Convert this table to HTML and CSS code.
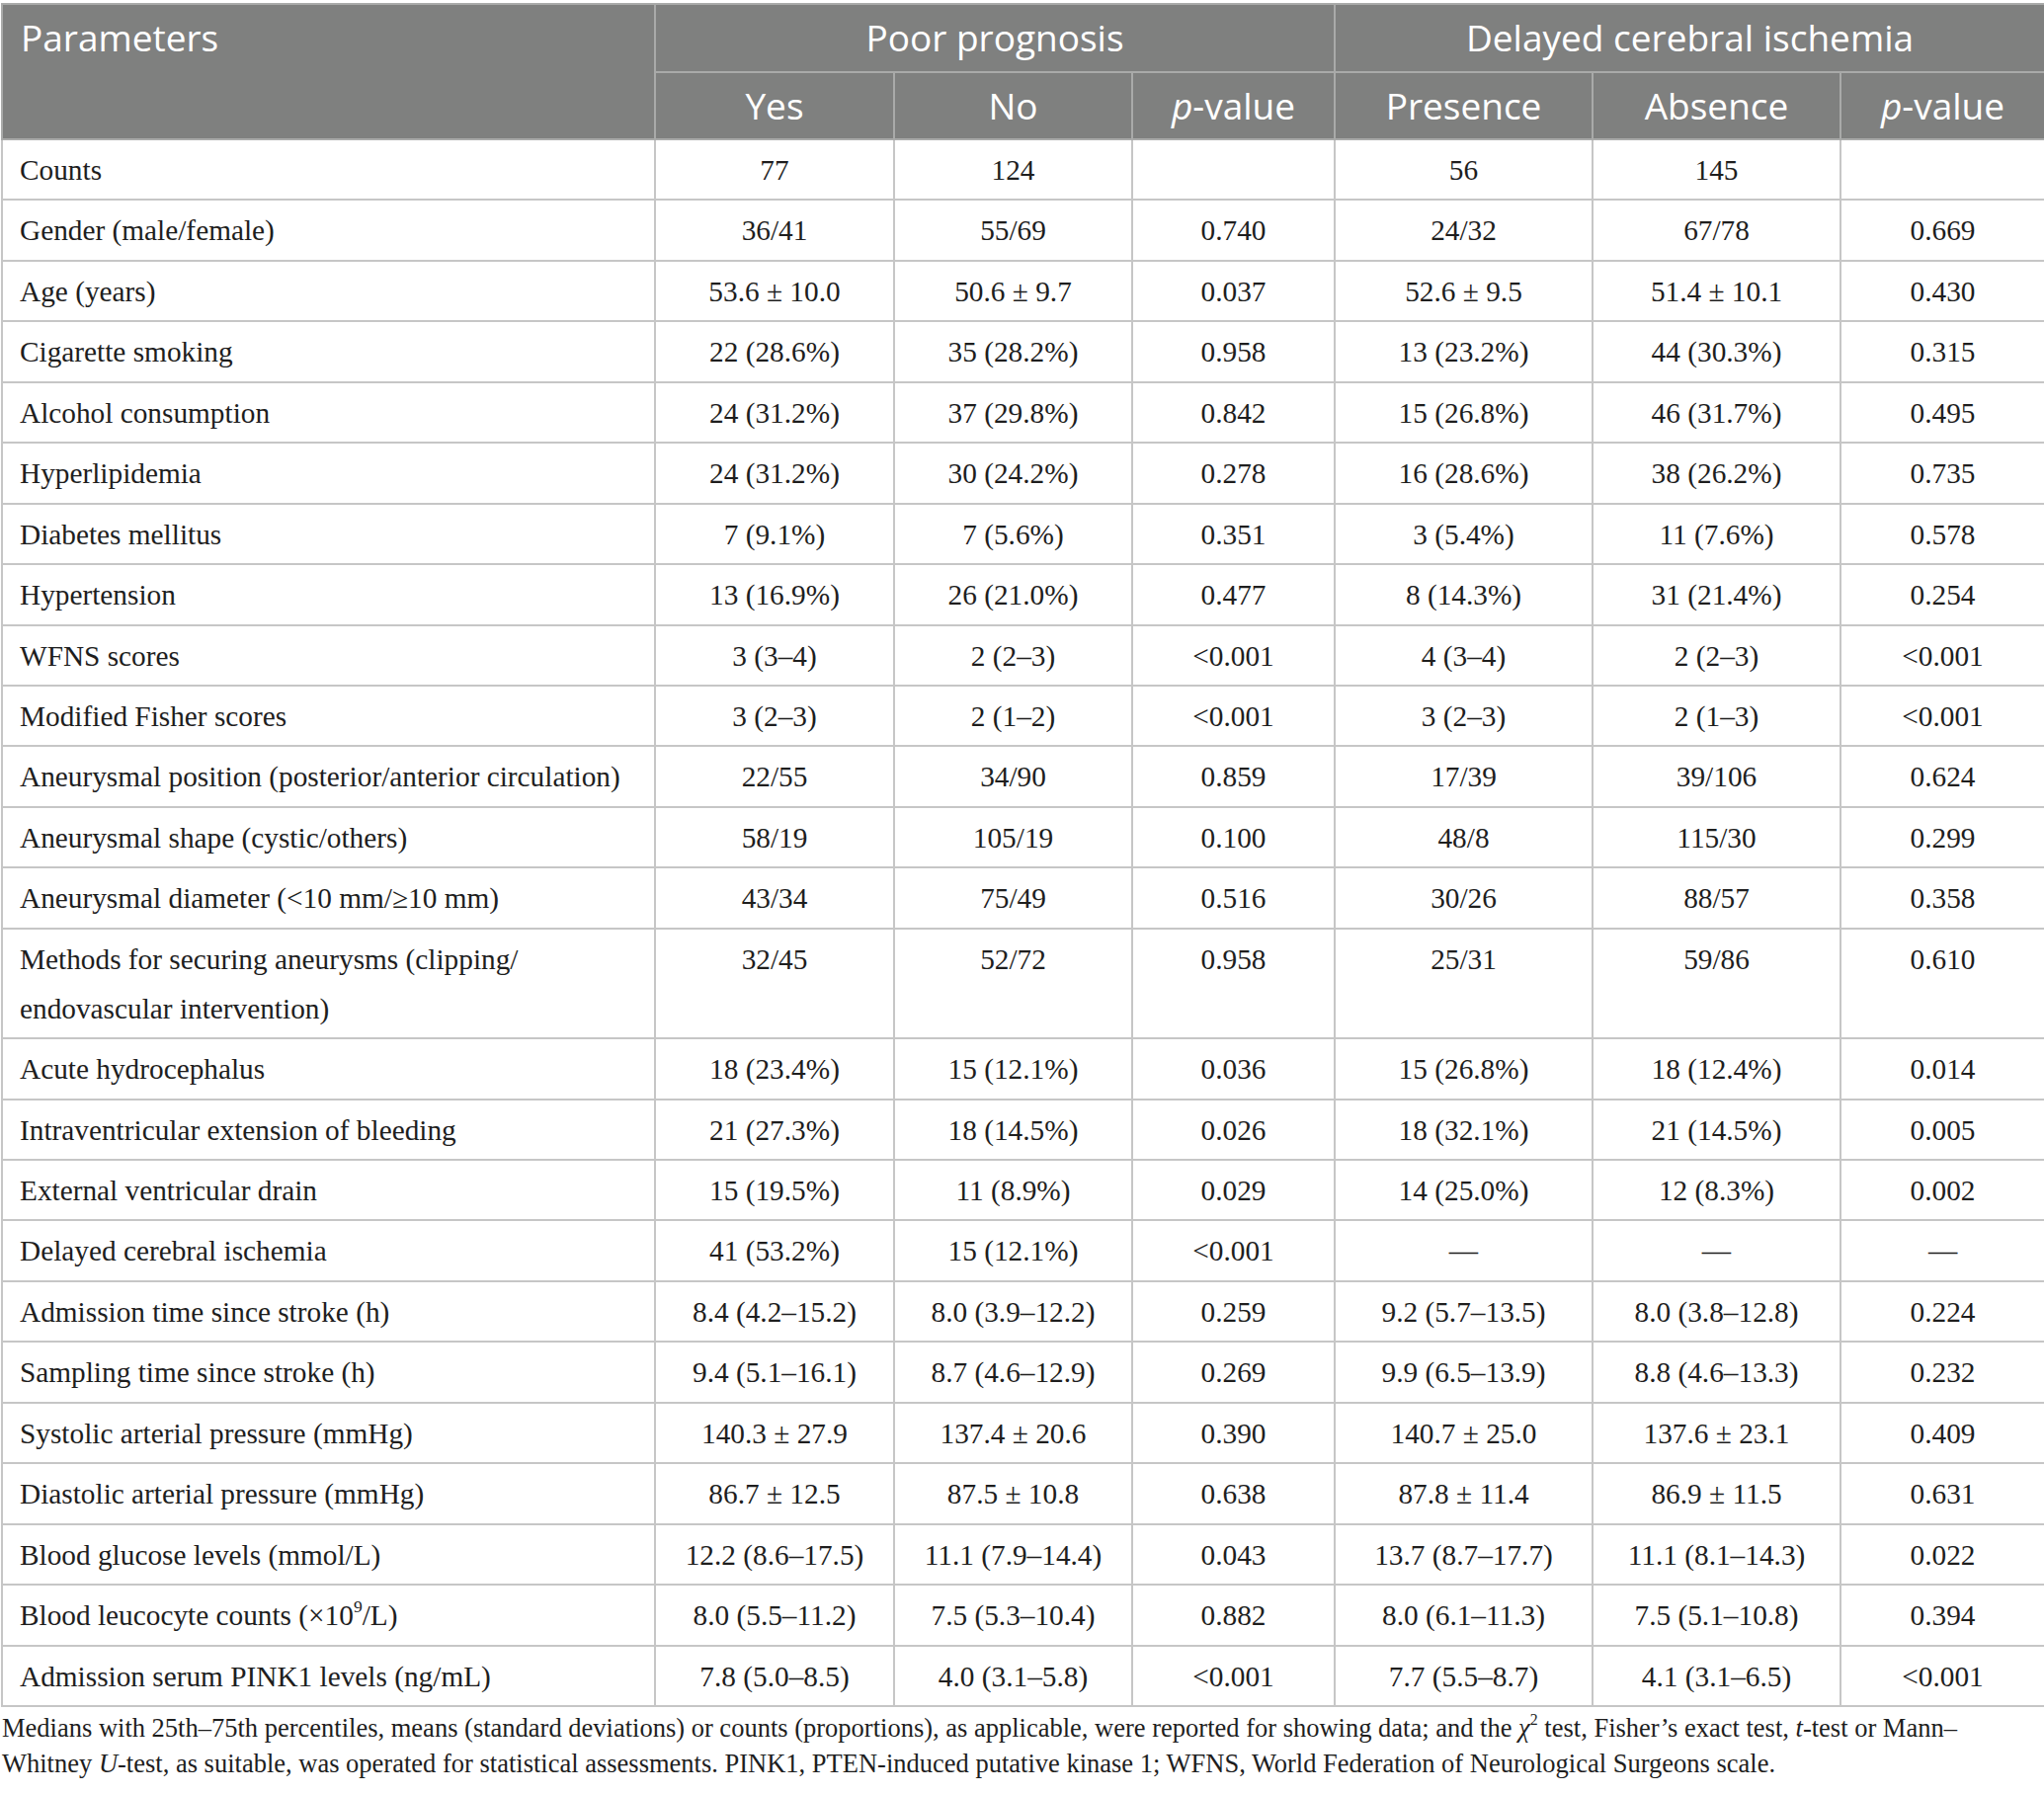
FILE: index.html
```html
<!DOCTYPE html>
<html lang="en">
<head>
<meta charset="utf-8">
<title>Table</title>
<link rel="stylesheet" href="styles.css">
</head>
<body>
<table class="data">
  <colgroup>
    <col class="c-param"><col class="c-yes"><col class="c-no"><col class="c-p1"><col class="c-pres"><col class="c-abs"><col class="c-p2">
  </colgroup>
  <thead>
    <tr class="h1">
      <th rowspan="2" class="th-param">Parameters</th>
      <th colspan="3">Poor prognosis</th>
      <th colspan="3">Delayed cerebral ischemia</th>
    </tr>
    <tr class="h2">
      <th>Yes</th><th>No</th><th><i>p</i>-value</th>
      <th>Presence</th><th>Absence</th><th><i>p</i>-value</th>
    </tr>
  </thead>
  <tbody>
    <tr><td class="param">Counts</td><td>77</td><td>124</td><td></td><td>56</td><td>145</td><td></td></tr>
    <tr><td class="param">Gender (male/female)</td><td>36/41</td><td>55/69</td><td>0.740</td><td>24/32</td><td>67/78</td><td>0.669</td></tr>
    <tr><td class="param">Age (years)</td><td>53.6 ± 10.0</td><td>50.6 ± 9.7</td><td>0.037</td><td>52.6 ± 9.5</td><td>51.4 ± 10.1</td><td>0.430</td></tr>
    <tr><td class="param">Cigarette smoking</td><td>22 (28.6%)</td><td>35 (28.2%)</td><td>0.958</td><td>13 (23.2%)</td><td>44 (30.3%)</td><td>0.315</td></tr>
    <tr><td class="param">Alcohol consumption</td><td>24 (31.2%)</td><td>37 (29.8%)</td><td>0.842</td><td>15 (26.8%)</td><td>46 (31.7%)</td><td>0.495</td></tr>
    <tr><td class="param">Hyperlipidemia</td><td>24 (31.2%)</td><td>30 (24.2%)</td><td>0.278</td><td>16 (28.6%)</td><td>38 (26.2%)</td><td>0.735</td></tr>
    <tr><td class="param">Diabetes mellitus</td><td>7 (9.1%)</td><td>7 (5.6%)</td><td>0.351</td><td>3 (5.4%)</td><td>11 (7.6%)</td><td>0.578</td></tr>
    <tr><td class="param">Hypertension</td><td>13 (16.9%)</td><td>26 (21.0%)</td><td>0.477</td><td>8 (14.3%)</td><td>31 (21.4%)</td><td>0.254</td></tr>
    <tr><td class="param">WFNS scores</td><td>3 (3–4)</td><td>2 (2–3)</td><td>&lt;0.001</td><td>4 (3–4)</td><td>2 (2–3)</td><td>&lt;0.001</td></tr>
    <tr><td class="param">Modified Fisher scores</td><td>3 (2–3)</td><td>2 (1–2)</td><td>&lt;0.001</td><td>3 (2–3)</td><td>2 (1–3)</td><td>&lt;0.001</td></tr>
    <tr><td class="param">Aneurysmal position (posterior/anterior circulation)</td><td>22/55</td><td>34/90</td><td>0.859</td><td>17/39</td><td>39/106</td><td>0.624</td></tr>
    <tr><td class="param">Aneurysmal shape (cystic/others)</td><td>58/19</td><td>105/19</td><td>0.100</td><td>48/8</td><td>115/30</td><td>0.299</td></tr>
    <tr><td class="param">Aneurysmal diameter (&lt;10 mm/≥10 mm)</td><td>43/34</td><td>75/49</td><td>0.516</td><td>30/26</td><td>88/57</td><td>0.358</td></tr>
    <tr><td class="param">Methods for securing aneurysms (clipping/<br>endovascular intervention)</td><td>32/45</td><td>52/72</td><td>0.958</td><td>25/31</td><td>59/86</td><td>0.610</td></tr>
    <tr><td class="param">Acute hydrocephalus</td><td>18 (23.4%)</td><td>15 (12.1%)</td><td>0.036</td><td>15 (26.8%)</td><td>18 (12.4%)</td><td>0.014</td></tr>
    <tr><td class="param">Intraventricular extension of bleeding</td><td>21 (27.3%)</td><td>18 (14.5%)</td><td>0.026</td><td>18 (32.1%)</td><td>21 (14.5%)</td><td>0.005</td></tr>
    <tr><td class="param">External ventricular drain</td><td>15 (19.5%)</td><td>11 (8.9%)</td><td>0.029</td><td>14 (25.0%)</td><td>12 (8.3%)</td><td>0.002</td></tr>
    <tr><td class="param">Delayed cerebral ischemia</td><td>41 (53.2%)</td><td>15 (12.1%)</td><td>&lt;0.001</td><td>—</td><td>—</td><td>—</td></tr>
    <tr><td class="param">Admission time since stroke (h)</td><td>8.4 (4.2–15.2)</td><td>8.0 (3.9–12.2)</td><td>0.259</td><td>9.2 (5.7–13.5)</td><td>8.0 (3.8–12.8)</td><td>0.224</td></tr>
    <tr><td class="param">Sampling time since stroke (h)</td><td>9.4 (5.1–16.1)</td><td>8.7 (4.6–12.9)</td><td>0.269</td><td>9.9 (6.5–13.9)</td><td>8.8 (4.6–13.3)</td><td>0.232</td></tr>
    <tr><td class="param">Systolic arterial pressure (mmHg)</td><td>140.3 ± 27.9</td><td>137.4 ± 20.6</td><td>0.390</td><td>140.7 ± 25.0</td><td>137.6 ± 23.1</td><td>0.409</td></tr>
    <tr><td class="param">Diastolic arterial pressure (mmHg)</td><td>86.7 ± 12.5</td><td>87.5 ± 10.8</td><td>0.638</td><td>87.8 ± 11.4</td><td>86.9 ± 11.5</td><td>0.631</td></tr>
    <tr><td class="param">Blood glucose levels (mmol/L)</td><td>12.2 (8.6–17.5)</td><td>11.1 (7.9–14.4)</td><td>0.043</td><td>13.7 (8.7–17.7)</td><td>11.1 (8.1–14.3)</td><td>0.022</td></tr>
    <tr><td class="param">Blood leucocyte counts (×10<sup>9</sup>/L)</td><td>8.0 (5.5–11.2)</td><td>7.5 (5.3–10.4)</td><td>0.882</td><td>8.0 (6.1–11.3)</td><td>7.5 (5.1–10.8)</td><td>0.394</td></tr>
    <tr><td class="param">Admission serum PINK1 levels (ng/mL)</td><td>7.8 (5.0–8.5)</td><td>4.0 (3.1–5.8)</td><td>&lt;0.001</td><td>7.7 (5.5–8.7)</td><td>4.1 (3.1–6.5)</td><td>&lt;0.001</td></tr>
  </tbody>
</table>
<p class="note">Medians with 25th–75th percentiles, means (standard deviations) or counts (proportions), as applicable, were reported for showing data; and the <i>χ</i><sup>2</sup> test, Fisher’s exact test, <i>t</i>-test or Mann–<br>Whitney <i>U</i>-test, as suitable, was operated for statistical assessments. PINK1, PTEN-induced putative kinase 1; WFNS, World Federation of Neurological Surgeons scale.</p>
</body>
</html>
```
FILE: styles.css
```css
html, body {
  margin: 0;
  background: #ffffff;
}
body {
  padding: 3px 0 0 1px;
  font-family: "Liberation Serif", "Times New Roman", serif;
  color: #1e1e1e;
}
.data {
  border-collapse: collapse;
  table-layout: fixed;
  width: 2068px;
}
.c-param { width: 661px; }
.c-yes { width: 242px; }
.c-no { width: 241px; }
.c-p1 { width: 205px; }
.c-pres { width: 261px; }
.c-abs { width: 251px; }
.c-p2 { width: 207px; }

.data th {
  background: #7f807f;
  color: #ffffff;
  font-family: "Open Sans", "Noto Sans", sans-serif;
  font-weight: 400;
  font-size: 37px;
  line-height: 66.5px;
  height: 66.5px;
  padding: 0;
  border: 2px solid #a9aaa9;
  text-align: center;
  vertical-align: middle;
  white-space: nowrap;
}
.data th.th-param {
  text-align: left;
  vertical-align: top;
  padding-left: 18px;
}
.data td {
  border: 2px solid #c6c6c6;
  font-size: 29.3px;
  line-height: 50px;
  padding: 5px 17px 4.45px;
  text-align: center;
  vertical-align: top;
  white-space: nowrap;
}
.data td.param {
  text-align: left;
  padding-left: 17px;
}
sup {
  font-size: 0.6em;
  line-height: 0;
  vertical-align: 0.75em;
}
.note {
  margin: 3px 0 0 1px;
  font-size: 26.5px;
  line-height: 36px;
  white-space: nowrap;
  color: #1e1e1e;
}
```
